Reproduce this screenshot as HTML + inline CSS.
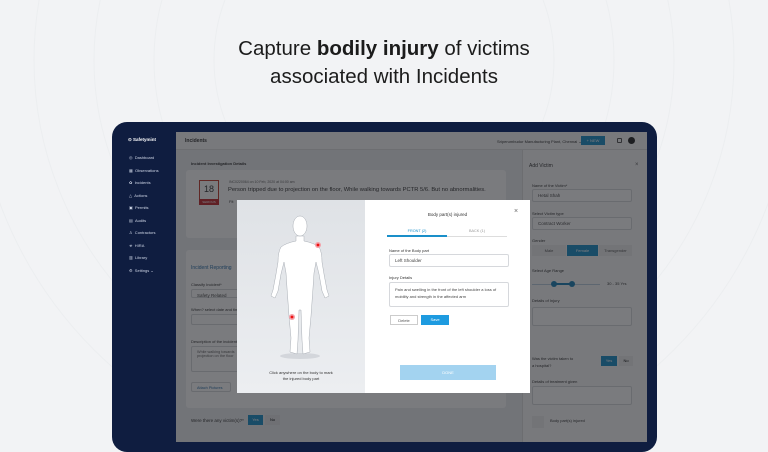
<!DOCTYPE html>
<html><head><meta charset="utf-8"><style>
*{margin:0;padding:0;box-sizing:border-box}
body{width:768px;height:432px;overflow:hidden;background:#f2f3f5;font-family:"Liberation Sans",sans-serif;position:relative}
.a{position:absolute}
h1{position:absolute;top:35px;left:0;width:768px;text-align:center;font-weight:400;font-size:20.5px;line-height:28px;color:#1c1c1c}
.t{font-size:4px;color:#333}
.inp{position:absolute;background:#fff;border:1px solid #d6d8dc;border-radius:2px;font-size:4.5px;color:#444;padding:3px 5px}
.lbl{position:absolute;font-size:4px;color:#333}
.side{font-size:4px;color:#cfd6e6}
</style></head><body>
<svg class="a" style="left:0;top:0" width="768" height="432"><g fill="none" stroke="#eceef0" stroke-width="1">
<circle cx="384" cy="60" r="170"/><circle cx="384" cy="60" r="230"/><circle cx="384" cy="60" r="290"/><circle cx="384" cy="60" r="350"/><circle cx="384" cy="60" r="410"/></g></svg>
<h1>Capture <b>bodily injury</b> of victims<br>associated with Incidents</h1>
<div class="a" style="left:112px;top:122px;width:545px;height:330px;background:#0f1d40;border-radius:15px"></div>
<div class="a" style="left:122px;top:132px;width:525px;height:310px;background:#0f1d40;overflow:hidden">
 <div class="a" style="left:6px;top:5px;font-size:4.5px;color:#fff;font-weight:bold">⊙ Safetymint</div>
 <div class="a side" style="left:7px;top:20px;line-height:12.5px">◎ &nbsp;Dashboard<br>▦ &nbsp;Observations<br>✿ &nbsp;Incidents<br>△ &nbsp;Actions<br>▣ &nbsp;Permits<br>▤ &nbsp;Audits<br>♙ &nbsp;Contractors<br>☣ &nbsp;HIRA<br>▥ &nbsp;Library<br>⚙ &nbsp;Settings ⌄</div>
 <div class="a" style="left:54px;top:0;width:471px;height:310px;background:#eceef0">
  <div class="a" style="left:0;top:0;width:471px;height:18px;background:#fafafa;border-bottom:1px solid #e0e0e0"></div>
  <div class="a" style="left:9px;top:6px;font-size:5px;color:#333;font-weight:bold">Incidents</div>
  <div class="a t" style="left:321px;top:7px">Sriperumbudur Manufacturing Plant, Chennai ⌄</div>
  <div class="a" style="left:405px;top:4px;width:24px;height:9px;background:#1a8fc9;color:#fff;font-size:4px;text-align:center;line-height:9px">+ NEW</div>
  <div class="a" style="left:441px;top:6px;width:5px;height:5px;border:1px solid #555;border-radius:1px"></div>
  <div class="a" style="left:452px;top:5px;width:7px;height:7px;border-radius:50%;background:#222"></div>
  <div class="a t" style="left:15px;top:29px;font-weight:bold">Incident Investigation Details</div>
  <div class="a" style="left:10px;top:38px;width:320px;height:68px;background:#fff;border-radius:3px"></div>
  <div class="a" style="left:23px;top:48px;width:20px;height:25px;border:1px solid #c0392b;background:#fff;font-size:9px;text-align:center;color:#333;padding-top:3px">18</div>
  <div class="a" style="left:23px;top:67px;width:20px;height:6px;background:#c0262d;color:#fff;font-size:3px;text-align:center;line-height:6px">SERIOUS</div>
  <div class="a t" style="left:53px;top:48px;font-size:3.5px;color:#666">INC0220064 on 10 Feb, 2020 at 04:00 am</div>
  <div class="a" style="left:52px;top:55px;font-size:5.8px;color:#333;white-space:nowrap">Person tripped due to projection on the floor, While walking towards PCTR 5/6. But no abnormalities.</div>
  <div class="a t" style="left:53px;top:67px">Fit</div>
  <div class="a" style="left:10px;top:118px;width:320px;height:158px;background:#fff;border-radius:3px"></div>
  <div class="a" style="left:15px;top:133px;font-size:5px;color:#2a6fa8">Incident Reporting</div>
  <div class="lbl" style="left:15px;top:150px">Classify Incident*</div>
  <div class="inp" style="left:15px;top:157px;width:60px;height:9px">Safety Related</div>
  <div class="lbl" style="left:15px;top:175px">When? select date and time</div>
  <div class="inp" style="left:15px;top:182px;width:60px;height:11px"></div>
  <div class="lbl" style="left:15px;top:207px">Description of the incident*</div>
  <div class="inp" style="left:15px;top:214px;width:60px;height:26px;color:#666;font-size:3.8px">While walking towards projection on the floor</div>
  <div class="inp" style="left:15px;top:250px;width:40px;height:10px;color:#2a6fa8;font-size:3.8px">Attach Pictures</div>
  <div class="a t" style="left:15px;top:286px;font-size:4.5px">Were there any victim(s)?*</div>
  <div class="a" style="left:72px;top:283px;width:15px;height:10px;background:#1a8fc9;color:#fff;font-size:4px;text-align:center;line-height:10px">Yes</div>
  <div class="a" style="left:89px;top:283px;width:15px;height:10px;background:#e4e5e7;font-size:4px;text-align:center;line-height:10px">No</div>
  <div class="a" style="left:346px;top:18px;width:125px;height:292px;background:#fafafa;border-left:1px solid #ddd">
   <div class="a" style="left:6px;top:13px;font-size:5px;color:#333">Add Victim</div>
   <div class="a" style="left:112px;top:12px;font-size:6px;color:#666">×</div>
   <div class="lbl" style="left:9px;top:33px">Name of the Victim*</div>
   <div class="inp" style="left:9px;top:39px;width:100px;height:13px">Hetal Shah</div>
   <div class="lbl" style="left:9px;top:61px">Select Victim type</div>
   <div class="inp" style="left:9px;top:67px;width:100px;height:13px">Contract Worker</div>
   <div class="lbl" style="left:9px;top:88px">Gender</div>
   <div class="a" style="left:9px;top:95px;width:34px;height:11px;background:#eee;font-size:4px;text-align:center;line-height:11px;color:#555">Male</div>
   <div class="a" style="left:44px;top:95px;width:31px;height:11px;background:#1a8fc9;font-size:4px;text-align:center;line-height:11px;color:#fff">Female</div>
   <div class="a" style="left:76px;top:95px;width:33px;height:11px;background:#eee;font-size:4px;text-align:center;line-height:11px;color:#555">Transgender</div>
   <div class="lbl" style="left:9px;top:118px">Select Age Range</div>
   <div class="a" style="left:9px;top:134px;width:68px;height:1px;background:#bcd"></div>
   <div class="a" style="left:30px;top:133px;width:19px;height:2px;background:#1a7fb5"></div>
   <div class="a" style="left:28px;top:131px;width:6px;height:6px;border-radius:50%;background:#1a7fb5"></div>
   <div class="a" style="left:46px;top:131px;width:6px;height:6px;border-radius:50%;background:#1a7fb5"></div>
   <div class="a" style="left:84px;top:131px;font-size:4px;color:#333">30 - 35 Yrs</div>
   <div class="lbl" style="left:9px;top:148px">Details of Injury</div>
   <div class="inp" style="left:9px;top:157px;width:100px;height:19px"></div>
   <div class="lbl" style="left:9px;top:205px;line-height:7px">Was the victim taken to<br>a hospital?</div>
   <div class="a" style="left:78px;top:206px;width:16px;height:10px;background:#1a8fc9;color:#fff;font-size:4px;text-align:center;line-height:10px">Yes</div>
   <div class="a" style="left:96px;top:206px;width:14px;height:10px;background:#eee;font-size:4px;text-align:center;line-height:10px">No</div>
   <div class="lbl" style="left:9px;top:229px">Details of treatment given</div>
   <div class="inp" style="left:9px;top:236px;width:100px;height:19px"></div>
   <div class="a" style="left:9px;top:266px;width:12px;height:12px;background:#eee"></div>
   <div class="lbl" style="left:27px;top:268px">Body part(s) injured</div>
  </div>
 </div>
 <div class="a" style="left:54px;top:0;width:471px;height:310px;background:rgba(25,27,32,0.58)"></div>
</div>
<div class="a" style="left:237px;top:200px;width:128px;height:193px;background:linear-gradient(#dfe2e6,#eceef1)">
 <svg width="128" height="193" viewBox="237 200 128 193" style="position:absolute;left:0;top:0">
  <ellipse cx="300" cy="356" rx="20" ry="3" fill="#d3d6db"/>
  <g fill="#fff" stroke="#a9aeb5" stroke-width="0.5">
   <path d="M296 236 L296 241 Q286 243 281 247 Q278 252 278 262 Q276 275 273 290 L271 296 L275 298 L278 291 L281 274 L284 262 L286 273 L287 288 L289 316 L291 338 L290 352 L297 354 L298 340 L299 310 L301 310 L302 340 L303 354 L310 352 L309 338 L311 316 L313 288 L314 273 L316 262 L319 274 L322 291 L325 298 L329 296 L327 290 Q324 275 322 262 Q322 252 319 247 Q314 243 304 241 L304 236 Z"/>
   <ellipse cx="300" cy="226" rx="7" ry="10"/>
  </g>
  <circle cx="318" cy="245" r="3" fill="#f3a0a8"/><circle cx="318" cy="245" r="1.4" fill="#e11"/>
  <circle cx="292" cy="317" r="3" fill="#f3a0a8"/><circle cx="292" cy="317" r="1.4" fill="#e11"/>
 </svg>
 <div class="a" style="left:0;top:170px;width:128px;text-align:center;font-size:4px;color:#333;line-height:6px">Click anywhere on the body to mark<br>the injured body part</div>
</div>
<div class="a" style="left:365px;top:200px;width:165px;height:193px;background:#fff">
 <div class="a" style="left:0;top:12px;width:165px;text-align:center;font-size:4.5px;color:#333">Body part(s) injured</div>
 <div class="a" style="left:149px;top:8px;font-size:7px;color:#666">×</div>
 <div class="a" style="left:22px;top:29px;width:60px;text-align:center;font-size:3.8px;color:#1a8fc9">FRONT (2)</div>
 <div class="a" style="left:82px;top:29px;width:60px;text-align:center;font-size:3.8px;color:#999">BACK (1)</div>
 <div class="a" style="left:22px;top:36px;width:120px;height:1px;background:#ddd"></div>
 <div class="a" style="left:22px;top:35px;width:60px;height:2px;background:#1a8fc9"></div>
 <div class="lbl" style="left:24px;top:48px">Name of the Body part</div>
 <div class="inp" style="left:24px;top:54px;width:120px;height:13px">Left Shoulder</div>
 <div class="lbl" style="left:24px;top:75px">Injury Details</div>
 <div class="inp" style="left:24px;top:82px;width:120px;height:25px;line-height:7px;font-size:4px">Pain and swelling in the front of the left shoulder a loss of mobility and strength in the affected arm</div>
 <div class="a" style="left:25px;top:115px;width:28px;height:10px;border:1px solid #ccc;font-size:4px;text-align:center;line-height:9px;color:#555">Delete</div>
 <div class="a" style="left:56px;top:115px;width:28px;height:10px;background:#1e9be0;font-size:4px;text-align:center;line-height:10px;color:#fff">Save</div>
 <div class="a" style="left:35px;top:165px;width:96px;height:15px;background:#a3d3f0;font-size:4px;text-align:center;line-height:15px;color:#fff">DONE</div>
</div>
</body></html>
